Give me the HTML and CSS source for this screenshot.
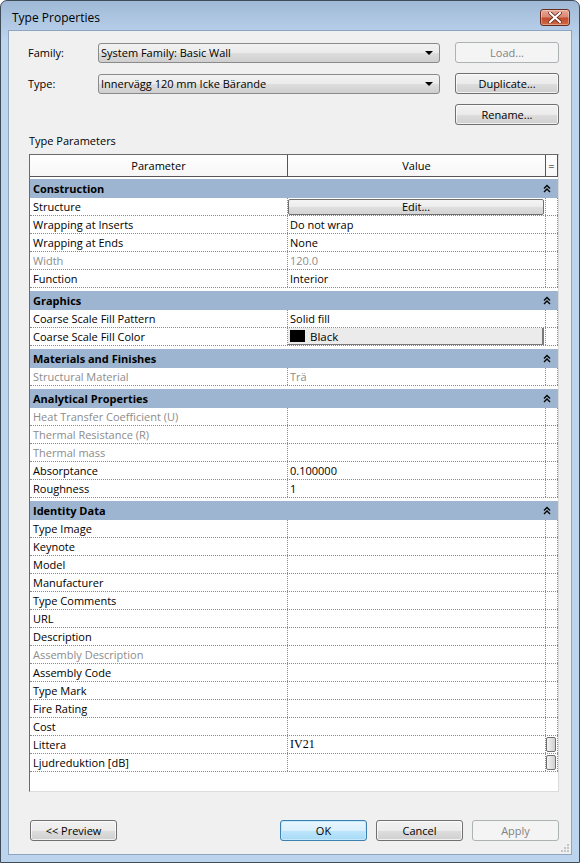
FILE: index.html
```html
<!DOCTYPE html>
<html>
<head>
<meta charset="utf-8">
<title>Type Properties</title>
<link rel="stylesheet" href="styles.css">
</head>
<body>
<div class="window">
  <div class="titlebar">
    <span class="title">Type Properties</span>
    <div class="close">
      <svg width="14" height="11" viewBox="0 0 14 11"><path d="M2 1 L12 10 M12 1 L2 10" stroke="#5a1a0e" stroke-width="3.6" stroke-linecap="square"/><path d="M2 1 L12 10 M12 1 L2 10" stroke="#ffffff" stroke-width="2.2" stroke-linecap="square"/></svg>
    </div>
  </div>
  <div class="client">
    <div class="topform">
      <span class="lbl">Family:</span>
      <div class="combo"><span>System Family: Basic Wall</span><span class="arrow"></span></div>
      <div class="btn disabled">Load...</div>
      <span class="lbl">Type:</span>
      <div class="combo"><span>Innervägg 120 mm Icke Bärande</span><span class="arrow"></span></div>
      <div class="btn">Duplicate...</div>
      <div class="btn col3">Rename...</div>
    </div>
    <div class="seclabel">Type Parameters</div>
    <div class="grid">
      <div class="ghead-row">
        <div class="h1">Parameter</div>
        <div class="h2">Value</div>
        <div class="h3">=</div>
      </div>

      <div class="group">
        <div class="gh"><span>Construction</span><svg class="chev" width="8" height="9" viewBox="0 0 8 9"><path d="M1 4.5 L4 1.5 L7 4.5 M1 8 L4 5 L7 8" fill="none" stroke="#000" stroke-width="1.4"/></svg></div>
        <div class="row"><div class="c1">Structure</div><div class="c2"><div class="cellbtn">Edit...</div></div><div class="c3"></div></div>
        <div class="row"><div class="c1">Wrapping at Inserts</div><div class="c2">Do not wrap</div><div class="c3"></div></div>
        <div class="row"><div class="c1">Wrapping at Ends</div><div class="c2">None</div><div class="c3"></div></div>
        <div class="row dis"><div class="c1">Width</div><div class="c2">120.0</div><div class="c3"></div></div>
        <div class="row"><div class="c1">Function</div><div class="c2">Interior</div><div class="c3"></div></div>
      </div>

      <div class="group">
        <div class="gh"><span>Graphics</span><svg class="chev" width="8" height="9" viewBox="0 0 8 9"><path d="M1 4.5 L4 1.5 L7 4.5 M1 8 L4 5 L7 8" fill="none" stroke="#000" stroke-width="1.4"/></svg></div>
        <div class="row"><div class="c1">Coarse Scale Fill Pattern</div><div class="c2">Solid fill</div><div class="c3"></div></div>
        <div class="row"><div class="c1">Coarse Scale Fill Color</div><div class="c2"><div class="colorbtn"><span class="swatch"></span>Black</div></div><div class="c3"></div></div>
      </div>

      <div class="group">
        <div class="gh"><span>Materials and Finishes</span><svg class="chev" width="8" height="9" viewBox="0 0 8 9"><path d="M1 4.5 L4 1.5 L7 4.5 M1 8 L4 5 L7 8" fill="none" stroke="#000" stroke-width="1.4"/></svg></div>
        <div class="row dis"><div class="c1">Structural Material</div><div class="c2">Trä</div><div class="c3"></div></div>
      </div>

      <div class="group">
        <div class="gh"><span>Analytical Properties</span><svg class="chev" width="8" height="9" viewBox="0 0 8 9"><path d="M1 4.5 L4 1.5 L7 4.5 M1 8 L4 5 L7 8" fill="none" stroke="#000" stroke-width="1.4"/></svg></div>
        <div class="row dis"><div class="c1">Heat Transfer Coefficient (U)</div><div class="c2"></div><div class="c3"></div></div>
        <div class="row dis"><div class="c1">Thermal Resistance (R)</div><div class="c2"></div><div class="c3"></div></div>
        <div class="row dis"><div class="c1">Thermal mass</div><div class="c2"></div><div class="c3"></div></div>
        <div class="row"><div class="c1">Absorptance</div><div class="c2">0.100000</div><div class="c3"></div></div>
        <div class="row"><div class="c1">Roughness</div><div class="c2">1</div><div class="c3"></div></div>
      </div>

      <div class="group">
        <div class="gh"><span>Identity Data</span><svg class="chev" width="8" height="9" viewBox="0 0 8 9"><path d="M1 4.5 L4 1.5 L7 4.5 M1 8 L4 5 L7 8" fill="none" stroke="#000" stroke-width="1.4"/></svg></div>
        <div class="row"><div class="c1">Type Image</div><div class="c2"></div><div class="c3"></div></div>
        <div class="row"><div class="c1">Keynote</div><div class="c2"></div><div class="c3"></div></div>
        <div class="row"><div class="c1">Model</div><div class="c2"></div><div class="c3"></div></div>
        <div class="row"><div class="c1">Manufacturer</div><div class="c2"></div><div class="c3"></div></div>
        <div class="row"><div class="c1">Type Comments</div><div class="c2"></div><div class="c3"></div></div>
        <div class="row"><div class="c1">URL</div><div class="c2"></div><div class="c3"></div></div>
        <div class="row"><div class="c1">Description</div><div class="c2"></div><div class="c3"></div></div>
        <div class="row dis"><div class="c1">Assembly Description</div><div class="c2"></div><div class="c3"></div></div>
        <div class="row"><div class="c1">Assembly Code</div><div class="c2"></div><div class="c3"></div></div>
        <div class="row"><div class="c1">Type Mark</div><div class="c2"></div><div class="c3"></div></div>
        <div class="row"><div class="c1">Fire Rating</div><div class="c2"></div><div class="c3"></div></div>
        <div class="row"><div class="c1">Cost</div><div class="c2"></div><div class="c3"></div></div>
        <div class="row"><div class="c1">Littera</div><div class="c2 serif">IV21</div><div class="c3"><span class="grip"></span></div></div>
        <div class="row"><div class="c1">Ljudreduktion [dB]</div><div class="c2"></div><div class="c3"><span class="grip"></span></div></div>
      </div>
    </div>

    <div class="footer">
      <div class="btn">&lt;&lt; Preview</div>
      <div class="spacer"></div>
      <div class="btn default">OK</div>
      <div class="btn">Cancel</div>
      <div class="btn disabled">Apply</div>
    </div>
    <svg class="sizegrip" width="10" height="10" viewBox="0 0 10 10">
      <rect x="7" y="1" width="2" height="2" fill="#c5c5c5"/>
      <rect x="4" y="4" width="2" height="2" fill="#c5c5c5"/>
      <rect x="7" y="4" width="2" height="2" fill="#c5c5c5"/>
      <rect x="1" y="7" width="2" height="2" fill="#c5c5c5"/>
      <rect x="4" y="7" width="2" height="2" fill="#c5c5c5"/>
      <rect x="7" y="7" width="2" height="2" fill="#c5c5c5"/>
    </svg>
  </div>
</div>
</body>
</html>
```

FILE: styles.css
```css
* { box-sizing: border-box; }
html, body { margin: 0; padding: 0; background: #ffffff; }
body {
  width: 580px;
  height: 863px;
  font-family: "Open Sans", "Noto Sans", sans-serif;
  font-size: 11px;
  color: #000;
}
.window {
  width: 580px;
  height: 863px;
  border: 1px solid #3e4b59;
  border-radius: 7px 7px 0 0;
  background: linear-gradient(to bottom, #9fb9d6 0px, #b3cbe6 26px, #bcd4ee 40px, #bcd4ee 100%);
  padding: 0 7px 7px 7px;
  display: flex;
  flex-direction: column;
}
.titlebar {
  height: 29px;
  display: flex;
  align-items: center;
  padding: 0 0 0 4px;
  flex: none;
}
.title {
  font-size: 12px;
  color: #000;
  flex: 1;
  padding-top: 4px;
}
.close {
  width: 30px;
  height: 17px;
  margin-top: 4px;
  margin-right: 2px;
  border: 1px solid #6b2c20;
  border-radius: 3px;
  background: linear-gradient(to bottom, #e8a796 0%, #d88a75 45%, #c24a2e 55%, #cf6a45 100%);
  display: flex;
  align-items: center;
  justify-content: center;
  box-shadow: inset 0 0 0 1px rgba(255,255,255,0.35);
}
.client {
  flex: 1;
  position: relative;
  background: #f0f0f0;
  border: 1px solid #8da5bf;
  padding: 11px 12px 0 19px;
}
.topform {
  display: grid;
  grid-template-columns: 70px 342px 15px 104px;
  grid-template-rows: 21px 21px 21px;
  row-gap: 10px;
  align-items: center;
}
.topform .btn { grid-column: 4; }
.topform .btn.col3 { grid-column: 4; grid-row: 3; }
.lbl { grid-column: 1; }
.combo {
  grid-column: 2;
  height: 20px;
  border: 1px solid #8a8a8a;
  border-radius: 3px;
  background: linear-gradient(to bottom, #f2f2f2 0%, #ebebeb 50%, #dddddd 51%, #cfcfcf 100%);
  display: flex;
  align-items: center;
  justify-content: space-between;
  padding: 0 6px 0 2px;
}
.arrow {
  width: 0; height: 0;
  border-left: 4px solid transparent;
  border-right: 4px solid transparent;
  border-top: 4px solid #000;
}
.btn {
  height: 21px;
  border: 1px solid #707070;
  border-radius: 3px;
  background: linear-gradient(to bottom, #f2f2f2 0%, #ebebeb 50%, #dddddd 51%, #cfcfcf 100%);
  display: flex;
  align-items: center;
  justify-content: center;
  box-shadow: inset 0 0 0 1px rgba(255,255,255,0.7);
}
.btn.disabled {
  border-color: #adb2b5;
  background: #f4f4f4;
  color: #838383;
  box-shadow: none;
}
.btn.default {
  border-color: #3c7fb1;
  background: linear-gradient(to bottom, #eaf6fd 0%, #d9f0fc 50%, #bee6fd 51%, #a7d9f5 100%);
  box-shadow: inset 0 0 0 1px #c6e8fb;
}
.seclabel {
  margin-top: 8px;
  height: 21px;
  line-height: 15px;
  padding-left: 1px;
}
.grid {
  margin-left: 1px;
  width: 530px;
  height: 638px;
  background: #ffffff;
  border-style: solid;
  border-width: 1px;
  border-color: #6a6a6a #dcdcdc #dcdcdc #6a6a6a;
}
.ghead-row {
  display: grid;
  grid-template-columns: 258px 258px 12px;
  height: 22px;
  background: linear-gradient(to bottom, #ffffff 0%, #f6f6f6 100%);
  border-bottom: 1px solid #555;
}
.ghead-row > div {
  display: flex;
  align-items: center;
  justify-content: center;
  border-right: 1px solid #555;
}
.ghead-row .h3 { font-size: 11px; }
.group { margin-top: 3px; }
.ghead-row + .group { margin-top: 2px; }
.gh {
  height: 19px;
  background: #9db5d0;
  font-weight: bold;
  display: flex;
  align-items: center;
  justify-content: space-between;
  padding: 0 7px 0 3px;
}
.chev { display: block; }
.row {
  display: grid;
  grid-template-columns: 258px 258px 12px;
  height: 18px;
  border-bottom: 1px dotted #8a8a8a;
}
.row > div {
  border-right: 1px dotted #8a8a8a;
  line-height: 17px;
  white-space: nowrap;
  overflow: hidden;
}
.c1 { padding-left: 3px; }
.c2 { padding-left: 2px; }
.row.dis { color: #8c8c8c; }
.serif { font-family: "Liberation Serif", serif; font-size: 12px; }
.cellbtn {
  height: 16px;
  margin: 1px 1px 0 0;
  border: 1px solid #707070;
  border-radius: 2px;
  background: linear-gradient(to bottom, #f4f4f4 0%, #ececec 50%, #dedede 51%, #d4d4d4 100%);
  line-height: 14px;
  text-align: center;
}
.row .c2:has(.cellbtn), .row .c2:has(.colorbtn) { padding-left: 0; }
.colorbtn {
  height: 17px;
  margin-right: 1px;
  background: #ebebeb;
  border-right: 2px solid #7a7a7a;
  border-bottom: 1px solid #7a7a7a;
  display: flex;
  align-items: center;
  padding-left: 2px;
  line-height: 15px;
  font-size: 11.5px;
}
.swatch {
  width: 15px;
  height: 12px;
  background: #000;
  margin-right: 5px;
}
.c3 { position: relative; }
.grip {
  display: block;
  width: 10px;
  height: 15px;
  margin: 1px 0 0 0;
  border: 1px solid #6f6f6f;
  border-radius: 2px;
  background: linear-gradient(to right, #f4f4f4, #d0d0d0);
}
.footer {
  display: flex;
  gap: 9px;
  margin-top: 28px;
  margin-left: 2px;
}
.footer .btn { width: 87px; }
.footer .spacer { flex: 1; }
.sizegrip { position: absolute; right: 1px; bottom: 1px; }
```
